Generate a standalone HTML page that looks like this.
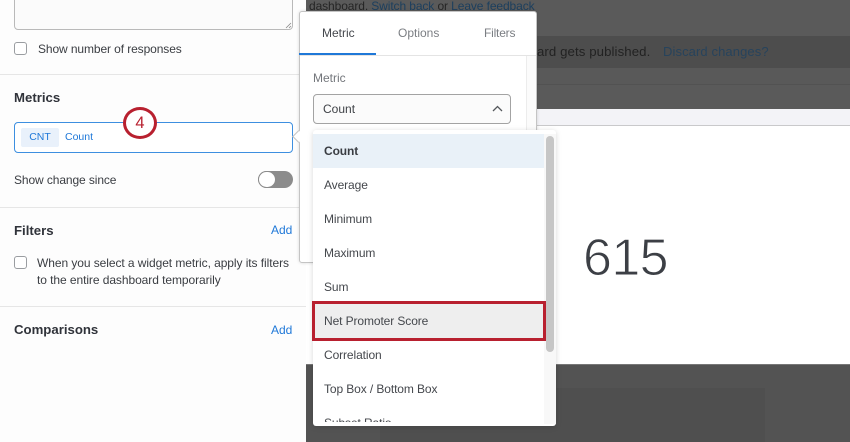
<!DOCTYPE html>
<html><head><meta charset="utf-8">
<style>
html,body{margin:0;padding:0}
body{width:850px;height:442px;overflow:hidden;position:relative;background:#595959;font-family:"Liberation Sans",sans-serif;color:#3a3d42}
div,span{position:absolute;box-sizing:border-box;white-space:nowrap}
.t{font-size:12px;line-height:16px;letter-spacing:-.1px}
.h{font-size:13.2px;font-weight:bold;line-height:18px;color:#30333a}
.cb{width:13px;height:13px;border:1px solid #9a9da1;border-radius:3px;background:#fff}
.add{font-size:12px;line-height:16px;color:#1f78d8}
.hr{left:0;width:306px;height:1px;background:#e6e6e6}
.it{left:0;width:231px;height:34px;font-size:12px;letter-spacing:-.1px;line-height:34px;padding-left:11px;color:#44474c}
</style></head><body>
<!-- dark page -->
<div style="left:306px;top:0;width:544px;height:36px;background:#5a5a5a"></div>
<div style="left:306px;top:36px;width:544px;height:32px;background:#4d4d4d"></div>
<div style="left:306px;top:84px;width:544px;height:25px;background:#5a5a5a;border-top:1px solid #525252"></div>
<div style="left:309px;top:-2px;font-size:12px;line-height:16px;color:#252525;letter-spacing:-.1px">dashboard. <span style="position:static;color:#1c3f5e;text-decoration:underline">Switch back</span> or <span style="position:static;color:#1c3f5e;text-decoration:underline">Leave feedback</span></div>
<div style="left:537px;top:44px;font-size:13.2px;line-height:16px;color:#222;letter-spacing:.1px">ard gets published.</div>
<div style="left:663px;top:44px;font-size:13px;line-height:16px;color:#27435c;letter-spacing:.1px">Discard changes?</div>
<!-- card -->
<div style="left:306px;top:109px;width:544px;height:17px;background:#f3f3f7;border-bottom:1px solid #c9c9cb"></div>
<div style="left:306px;top:126px;width:544px;height:238px;background:#fff"></div>
<div style="left:306px;top:364px;width:544px;height:78px;background:#535353;border-top:1px solid #777"></div>
<div style="left:380px;top:388px;width:385px;height:54px;background:#4f4f4f"></div>
<div style="left:583px;top:227px;font-size:52px;line-height:62px;color:#3c3f45;letter-spacing:-.6px;-webkit-text-stroke:1px #fff">615</div>
<!-- sidebar -->
<div style="left:0;top:0;width:306px;height:442px;background:#fdfdfd"></div>
<div style="left:14px;top:-6px;width:279px;height:36px;background:#fbfbfb;border:1px solid #b9b9b9;border-radius:4px"></div>
<svg style="position:absolute;left:285px;top:22px" width="7" height="7"><path d="M1 6L6 1M4 6L6 4" stroke="#8a8a8a" stroke-width=".8"/></svg>
<div class="cb" style="left:14px;top:42px"></div>
<div class="t" style="left:38px;top:41px">Show number of responses</div>
<div class="hr" style="top:74px"></div>
<div class="h" style="left:14px;top:89px">Metrics</div>
<div style="left:14px;top:122px;width:279px;height:31px;background:#fff;border:1px solid #3d8fe0;border-radius:4px"></div>
<div style="left:21px;top:128px;width:38px;height:19px;background:#e9f1fb;border-radius:2px;font-size:10.5px;line-height:19px;text-align:center;color:#1f78d8">CNT</div>
<div style="left:65px;top:129px;font-size:10.5px;line-height:17px;color:#1f78d8">Count</div>
<div style="left:123px;top:107px;width:34px;height:32px;border:3px solid #b8202f;border-radius:50%;background:#fff;color:#b8202f;font-size:16.5px;line-height:26px;text-align:center">4</div>
<div class="t" style="left:14px;top:172px">Show change since</div>
<div style="left:258px;top:171px;width:35px;height:17px;border-radius:9px;background:#8c8c8c"></div>
<div style="left:259px;top:172px;width:16px;height:15px;border-radius:8px;background:#fff;box-shadow:0 0 0 1px #8c8c8c"></div>
<div class="hr" style="top:207px"></div>
<div class="h" style="left:14px;top:222px">Filters</div>
<div class="add" style="left:271px;top:222px">Add</div>
<div class="cb" style="left:14px;top:256px"></div>
<div class="t" style="left:37px;top:255px;letter-spacing:-.07px">When you select a widget metric, apply its filters</div>
<div class="t" style="left:37px;top:272px;letter-spacing:-.07px">to the entire dashboard temporarily</div>
<div class="hr" style="top:306px"></div>
<div class="h" style="left:14px;top:321px">Comparisons</div>
<div class="add" style="left:271px;top:322px">Add</div>
<!-- popover -->
<div style="left:299px;top:11px;width:238px;height:252px;background:#fff;border:1px solid #c4c4c4;border-radius:3px;box-shadow:0 0 3px rgba(0,0,0,.15)"></div>
<div style="left:294px;top:132px;width:9px;height:9px;background:#fff;border-left:1px solid #c4c4c4;border-bottom:1px solid #c4c4c4;transform:rotate(45deg)"></div>
<div style="left:526px;top:56px;width:10px;height:206px;background:#fbfbfb;border-left:1px solid #ececec"></div>
<div style="left:300px;top:55px;width:236px;height:1px;background:#e4e4e4"></div>
<div style="left:299px;top:53px;width:77px;height:2px;background:#1f78d8"></div>
<div style="left:322px;top:25px;font-size:12px;line-height:16px;color:#44474c">Metric</div>
<div style="left:398px;top:25px;font-size:12px;line-height:16px;color:#7b7e83">Options</div>
<div style="left:484px;top:25px;font-size:12px;line-height:16px;color:#7b7e83;letter-spacing:-.2px">Filters</div>
<div style="left:313px;top:70px;font-size:12px;line-height:16px;color:#73767b">Metric</div>
<div style="left:313px;top:94px;width:198px;height:30px;background:#fbfbfb;border:1px solid #a3a3a3;border-radius:4px"></div>
<div style="left:323px;top:101px;font-size:12px;line-height:16px;color:#3f4247">Count</div>
<svg style="position:absolute;left:491px;top:104px" width="13" height="9"><path d="M2 7L6.500 2.500L11 7" fill="none" stroke="#55585c" stroke-width="1.300"/></svg>
<!-- dropdown -->
<div style="left:313px;top:130px;width:243px;height:296px;background:#fff;border-radius:3px;box-shadow:0 1px 6px rgba(0,0,0,.16);overflow:hidden">
<div style="left:231px;top:4px;width:12px;height:290px;background:#f8f8f8"></div>
<div style="left:233px;top:6px;width:8px;height:216px;border-radius:4px;background:#c6c6c6"></div>
<div class="it" style="top:4px;background:#e9f1f8;font-weight:bold;color:#3a3d42">Count</div>
<div class="it" style="top:38px">Average</div>
<div class="it" style="top:72px">Minimum</div>
<div class="it" style="top:106px">Maximum</div>
<div class="it" style="top:140px">Sum</div>
<div class="it" style="top:174px;background:#eee">Net Promoter Score</div>
<div class="it" style="top:208px">Correlation</div>
<div class="it" style="top:242px">Top Box / Bottom Box</div>
<div class="it" style="top:276px;height:16px;overflow:hidden">Subset Ratio</div>
</div>
<div style="left:312px;top:301px;width:234px;height:40px;border:3px solid #b8202f"></div>
</body></html>
